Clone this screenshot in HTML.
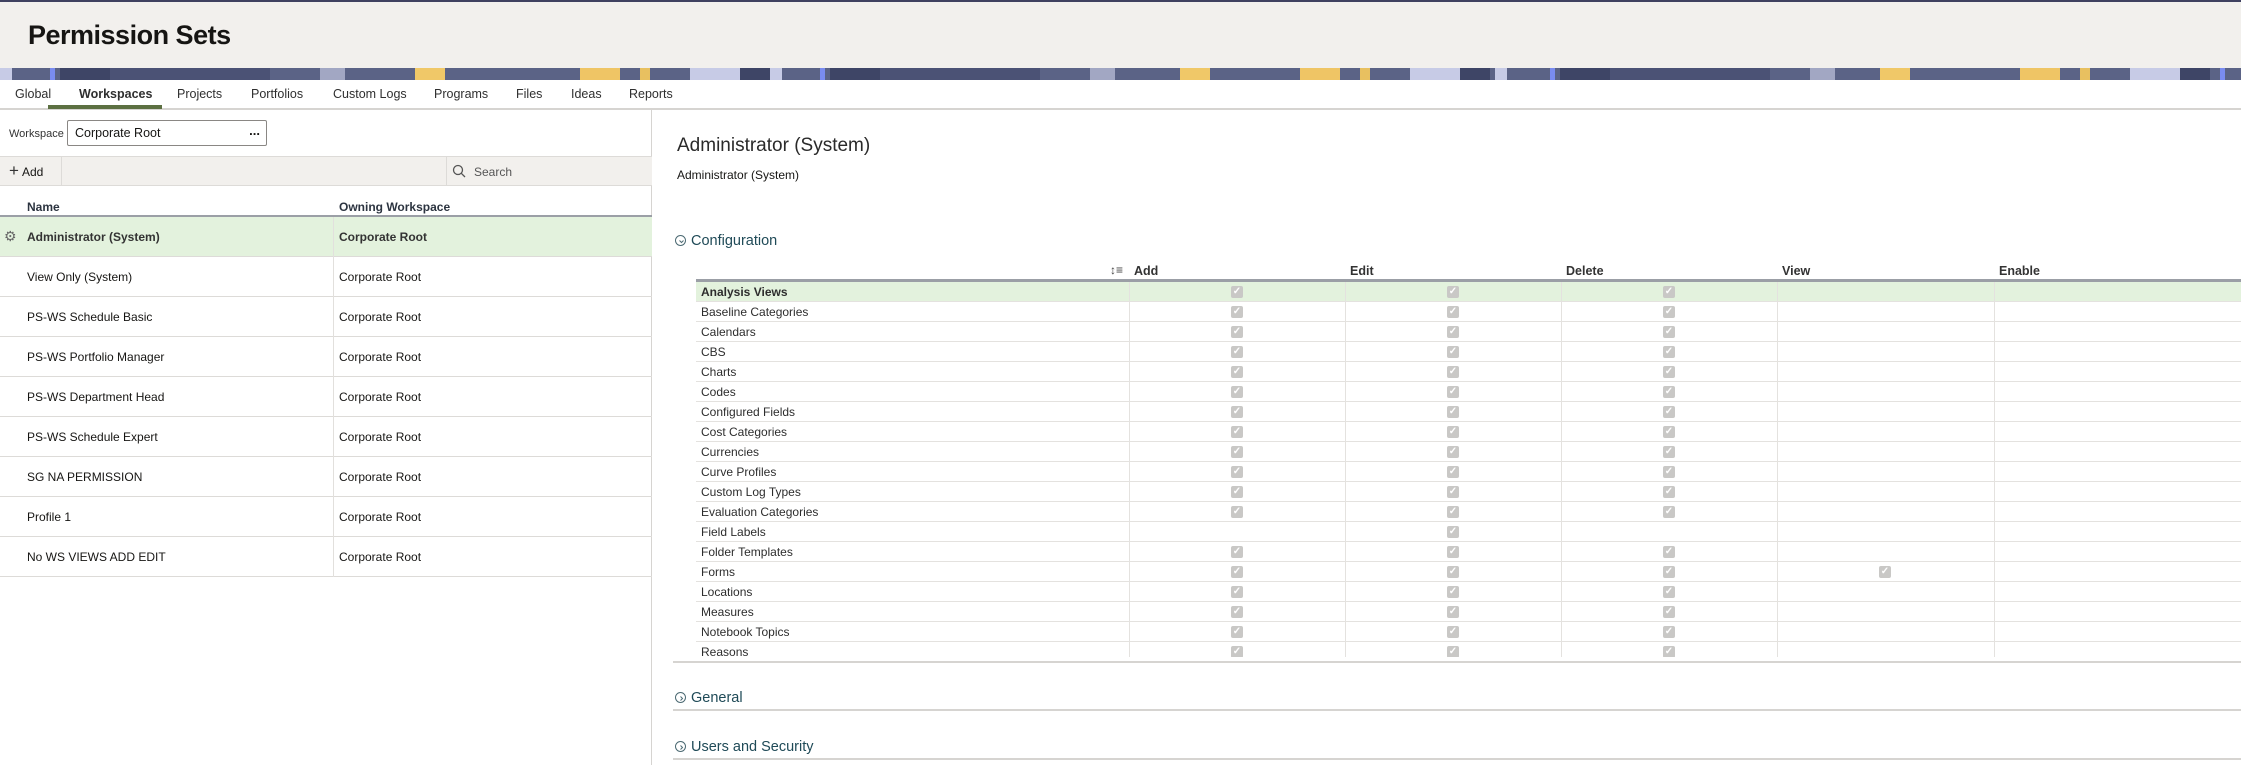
<!DOCTYPE html>
<html><head><meta charset="utf-8"><style>
*{box-sizing:border-box;margin:0;padding:0}
body{width:2241px;height:765px;overflow:hidden;background:#fff;font-family:"Liberation Sans",sans-serif;color:#161513;position:relative}
.abs{position:absolute}
#top{left:0;top:0;width:2241px;height:2px;background:#3f4160}
#hdr{left:0;top:2px;width:2241px;height:66px;background:#f2f0ed}
#hdr h1{position:absolute;left:28px;top:18px;font-size:27px;font-weight:bold;letter-spacing:-0.5px}
#banner{left:0;top:68px;width:2241px;height:12px;overflow:hidden;background:#5b6386}
#banner i{position:absolute;top:0;height:12px;display:block}
#tabs{left:0;top:80px;width:2241px;height:30px;border-bottom:2px solid #d6d4d1}
.tab{position:absolute;top:7px;font-size:12.5px;color:#2f2f2f}
.tab.on{font-weight:bold}
#uline{left:48px;top:105px;width:114px;height:4px;background:#5c7042}
#left{left:0;top:110px;width:652px;height:655px;border-right:1px solid #d6d4d1}
.lbl{font-size:11px;color:#333}
.inp{border:1px solid #8a8784;border-radius:2px;height:26px;background:#fff}
.row{position:absolute;left:0;width:652px;height:40px;border-bottom:1px solid #dddbd8;font-size:12px}
.row span{position:absolute;top:13px}
.row .c2{left:339px}
.row .c1{left:27px}
.row:before{content:"";position:absolute;left:333px;top:0;width:1px;height:40px;background:#e2e0dd}
.trow{position:absolute;left:696px;width:1545px;height:20px;border-bottom:1px solid #e4e2df;font-size:12px}
.trow span{position:absolute;left:5px;top:3px;color:#2d2d2d}
.trow i{position:absolute;top:0;width:1px;height:20px;background:#e4e2df}
.cb{position:absolute;top:4px;width:12px;height:12px;background:#c9c8c6;border-radius:2px;color:#fff;font-size:10px;line-height:12px;text-align:center;font-style:normal}
.th{position:absolute;top:264px;font-size:12.5px;font-weight:bold;color:#333}
.sec{position:absolute;left:675px;font-size:14.5px;color:#1f4a57}
.circ{display:inline-block;width:11px;height:11px;border:1px solid #4c6a73;border-radius:50%;vertical-align:-1px;margin-right:5px;position:relative}
.circ svg{position:absolute;left:1px;top:1px}
</style></head><body>
<div id="top" class="abs"></div>
<div id="hdr" class="abs"><h1>Permission Sets</h1></div>
<div id="banner" class="abs">
<i style="left:0;width:12px;background:#c7cbe6"></i><i style="left:50px;width:5px;background:#7a8cf0"></i><i style="left:60px;width:50px;background:#3e4566"></i><i style="left:110px;width:160px;background:#4b5275"></i><i style="left:320px;width:25px;background:#a2a7c3"></i><i style="left:415px;width:30px;background:#f0c868"></i><i style="left:580px;width:40px;background:#efc565"></i><i style="left:640px;width:10px;background:#e8c060"></i><i style="left:690px;width:50px;background:#c7cbe6"></i><i style="left:740px;width:30px;background:#3e4566"></i>
<i style="left:770px;width:12px;background:#c7cbe6"></i><i style="left:820px;width:5px;background:#7a8cf0"></i><i style="left:830px;width:50px;background:#3e4566"></i><i style="left:880px;width:160px;background:#4b5275"></i><i style="left:1090px;width:25px;background:#a2a7c3"></i><i style="left:1180px;width:30px;background:#f0c868"></i><i style="left:1300px;width:40px;background:#efc565"></i><i style="left:1360px;width:10px;background:#e8c060"></i><i style="left:1410px;width:50px;background:#c7cbe6"></i><i style="left:1460px;width:30px;background:#3e4566"></i>
<i style="left:1495px;width:12px;background:#c7cbe6"></i><i style="left:1550px;width:5px;background:#7a8cf0"></i><i style="left:1560px;width:50px;background:#3e4566"></i><i style="left:1610px;width:160px;background:#4b5275"></i><i style="left:1810px;width:25px;background:#a2a7c3"></i><i style="left:1880px;width:30px;background:#f0c868"></i><i style="left:2020px;width:40px;background:#efc565"></i><i style="left:2080px;width:10px;background:#e8c060"></i><i style="left:2130px;width:50px;background:#c7cbe6"></i><i style="left:2180px;width:30px;background:#3e4566"></i><i style="left:2220px;width:5px;background:#7a8cf0"></i>
</div>
<div id="tabs" class="abs">
<span class="tab" style="left:15px">Global</span><span class="tab on" style="left:79px">Workspaces</span><span class="tab" style="left:177px">Projects</span><span class="tab" style="left:251px">Portfolios</span><span class="tab" style="left:333px">Custom Logs</span><span class="tab" style="left:434px">Programs</span><span class="tab" style="left:516px">Files</span><span class="tab" style="left:571px">Ideas</span><span class="tab" style="left:629px">Reports</span>
</div>
<div id="uline" class="abs"></div>
<div id="left" class="abs"></div>
<span class="abs lbl" style="left:9px;top:128px">Workspace</span>
<div class="abs inp" style="left:67px;top:120px;width:200px"><span style="position:absolute;left:7px;top:5px;font-size:12.5px">Corporate Root</span><span style="position:absolute;right:6px;top:2px;font-size:13px;font-weight:bold">...</span></div>
<div class="abs" style="left:0;top:156px;width:652px;height:30px;background:#f2f0ed;border-top:1px solid #dddbd8;border-bottom:1px solid #dddbd8"></div>
<div class="abs" style="left:61px;top:157px;width:1px;height:28px;background:#dddbd8"></div>
<div class="abs" style="left:446px;top:157px;width:1px;height:28px;background:#dddbd8"></div>
<span class="abs" style="left:9px;top:161px;font-size:17px;color:#333">+</span><span class="abs" style="left:22px;top:165px;font-size:12px">Add</span>
<svg class="abs" style="left:452px;top:164px" width="14" height="14"><circle cx="6" cy="6" r="4.5" fill="none" stroke="#555" stroke-width="1.3"/><line x1="9.3" y1="9.3" x2="13" y2="13" stroke="#555" stroke-width="1.3"/></svg>
<span class="abs" style="left:474px;top:165px;font-size:12px;color:#555">Search</span>
<span class="abs" style="left:27px;top:200px;font-size:12px;font-weight:bold;color:#2c3440">Name</span>
<span class="abs" style="left:339px;top:200px;font-size:12px;font-weight:bold;color:#2c3440">Owning Workspace</span>
<div class="abs" style="left:0;top:215px;width:652px;height:2px;background:#9b9fa6"></div>
<div class="row" style="top:217px;background:#e3f2dd;font-weight:bold;color:#333"><span style="left:4px;top:11px;font-weight:normal;color:#666;font-size:14px">⚙</span><span class="c1">Administrator (System)</span><span class="c2">Corporate Root</span></div>
<div class="row" style="top:257px"><span class="c1">View Only (System)</span><span class="c2">Corporate Root</span></div>
<div class="row" style="top:297px"><span class="c1">PS-WS Schedule Basic</span><span class="c2">Corporate Root</span></div>
<div class="row" style="top:337px"><span class="c1">PS-WS Portfolio Manager</span><span class="c2">Corporate Root</span></div>
<div class="row" style="top:377px"><span class="c1">PS-WS Department Head</span><span class="c2">Corporate Root</span></div>
<div class="row" style="top:417px"><span class="c1">PS-WS Schedule Expert</span><span class="c2">Corporate Root</span></div>
<div class="row" style="top:457px"><span class="c1">SG NA PERMISSION</span><span class="c2">Corporate Root</span></div>
<div class="row" style="top:497px"><span class="c1">Profile 1</span><span class="c2">Corporate Root</span></div>
<div class="row" style="top:537px"><span class="c1">No WS VIEWS ADD EDIT</span><span class="c2">Corporate Root</span></div>

<span class="abs" style="left:677px;top:135px;font-size:19px;color:#2a2a2a">Administrator (System)</span>
<span class="abs" style="left:677px;top:168px;font-size:12px">Administrator (System)</span>
<span class="sec" style="top:233px"><span class="circ"><svg width="9" height="9"><path d="M2.5 3.5 L4.5 5.5 L6.5 3.5" fill="none" stroke="#4c6a73" stroke-width="1"/></svg></span>Configuration</span>
<span class="abs" style="left:1110px;top:263px;font-size:12px;color:#444">↕≡</span>
<span class="th" style="left:1134px">Add</span><span class="th" style="left:1350px">Edit</span><span class="th" style="left:1566px">Delete</span><span class="th" style="left:1782px">View</span><span class="th" style="left:1999px">Enable</span>
<div class="abs" style="left:696px;top:279px;width:1545px;height:3px;background:#9b9fa6"></div>
<div id="tbl"></div>
<div class="abs" style="left:673px;top:661px;width:1568px;height:2px;background:#d6d4d1"></div>
<span class="sec" style="top:690px"><span class="circ"><svg width="9" height="9"><path d="M3.5 2.5 L5.5 4.5 L3.5 6.5" fill="none" stroke="#4c6a73" stroke-width="1"/></svg></span>General</span>
<div class="abs" style="left:673px;top:709px;width:1568px;height:2px;background:#d6d4d1"></div>
<span class="sec" style="top:739px"><span class="circ"><svg width="9" height="9"><path d="M3.5 2.5 L5.5 4.5 L3.5 6.5" fill="none" stroke="#4c6a73" stroke-width="1"/></svg></span>Users and Security</span>
<div class="abs" style="left:673px;top:758px;width:1568px;height:2px;background:#d6d4d1"></div>
<script>
var rows=[["Analysis Views","aed"],["Baseline Categories","aed"],["Calendars","aed"],["CBS","aed"],["Charts","aed"],["Codes","aed"],["Configured Fields","aed"],["Cost Categories","aed"],["Currencies","aed"],["Curve Profiles","aed"],["Custom Log Types","aed"],["Evaluation Categories","aed"],["Field Labels","e"],["Folder Templates","aed"],["Forms","aedv"],["Locations","aed"],["Measures","aed"],["Notebook Topics","aed"],["Reasons","aed"]];
var cols={a:1237,e:1453,d:1669,v:1885};var h="";
rows.forEach(function(r,i){var top=282+i*20;var hh=i==18?15:20;
h+='<div class="trow" style="top:'+top+'px;height:'+hh+'px;'+(i==0?'background:#e3f2dd;':'')+(i==18?'border-bottom:none;overflow:hidden;':'')+'"><span style="'+(i==0?'font-weight:bold;':'')+'">'+r[0]+'</span>';
[1129,1345,1561,1777,1994].forEach(function(x){h+='<i style="left:'+(x-696)+'px"></i>'});
r[1].split("").forEach(function(c){h+='<b class="cb" style="left:'+(cols[c]-696-6)+'px">✓</b>'});
h+='</div>'});
document.getElementById("tbl").innerHTML=h;
</script>
</body></html>
